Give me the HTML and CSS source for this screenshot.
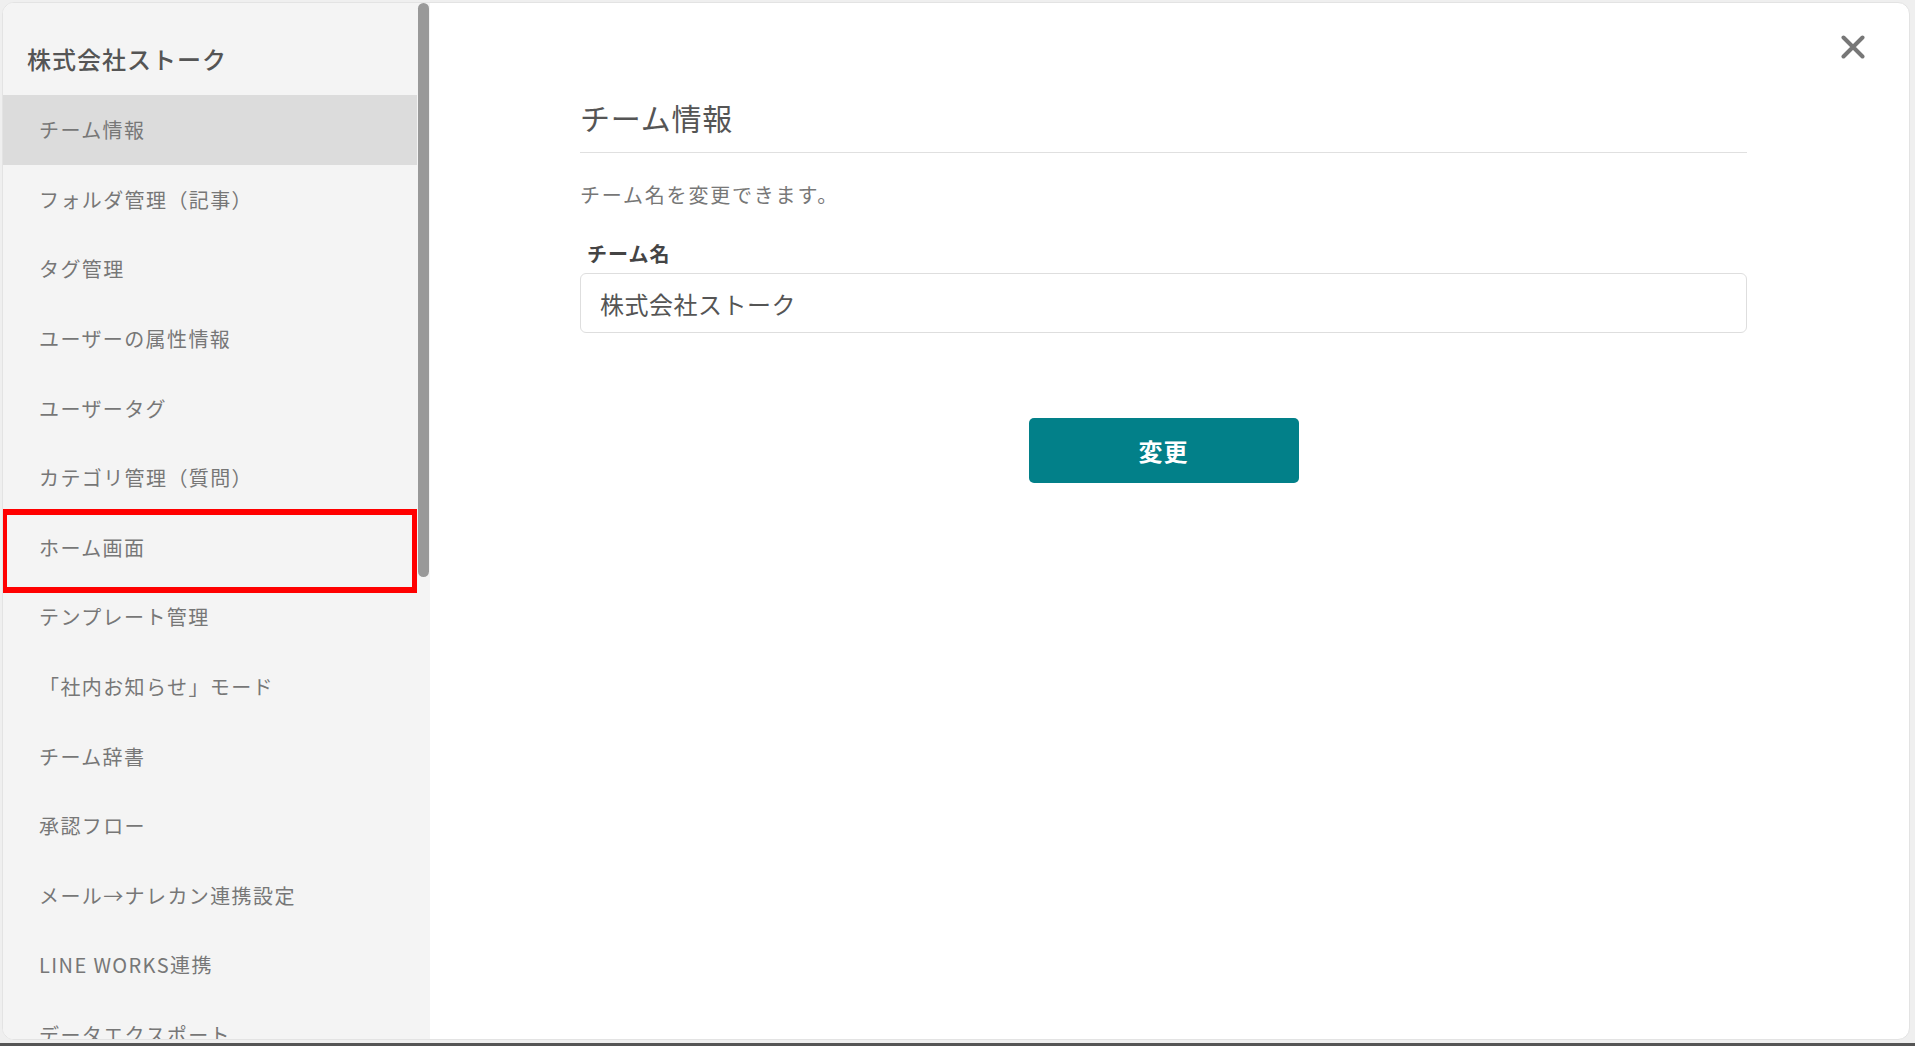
FILE: index.html
```html
<!DOCTYPE html>
<html lang="ja">
	<head>
		<meta charset="UTF-8" />
		<meta name="viewport" content="width=device-width, initial-scale=1.0" />
		<title>チーム設定</title>
		<link rel="stylesheet" href="styles.css">
	</head>
	<body>
		<div class="modal">
			<div class="sidebar">
				<div class="side-menu">
					<div class="team-title">株式会社ストーク</div>
					<div class="menu-item active">チーム情報</div>
					<div class="menu-item">フォルダ管理（記事）</div>
					<div class="menu-item">タグ管理</div>
					<div class="menu-item">ユーザーの属性情報</div>
					<div class="menu-item">ユーザータグ</div>
					<div class="menu-item">カテゴリ管理（質問）</div>
					<div class="menu-item highlight">ホーム画面</div>
					<div class="menu-item">テンプレート管理</div>
					<div class="menu-item">「社内お知らせ」モード</div>
					<div class="menu-item">チーム辞書</div>
					<div class="menu-item">承認フロー</div>
					<div class="menu-item">メール→ナレカン連携設定</div>
					<div class="menu-item">LINE WORKS連携</div>
					<div class="menu-item">データエクスポート</div>
				</div>
				<div class="scroll-track">
					<div class="scroll-thumb"></div>
				</div>
			</div>

			<div class="main">
				<span class="close">
					<svg width="24" height="24" viewBox="0 0 24 24">
						<path d="M2.5 2.5 L21.5 21.5 M21.5 2.5 L2.5 21.5" stroke="#777" stroke-width="4" stroke-linecap="round" fill="none" />
					</svg>
				</span>
				<h2 class="page-title">チーム情報</h2>
				<p class="description">チーム名を変更できます。</p>
				<label class="field-label" for="teamName">チーム名</label>
				<input type="text" id="teamName" class="text-input" value="株式会社ストーク" />
				<div class="actions">
					<button class="primary-button">変更</button>
				</div>
			</div>
		</div>
		<div class="bottom-bar"></div>
	</body>
</html>
```

FILE: styles.css
```css
body {
	margin: 0;
	height: 1046px;
	overflow: hidden;
	display: flex;
	flex-direction: column;
	background-color: #efefef;
	font-family: "Noto Sans CJK JP", "Noto Sans", sans-serif;
}
.modal {
	flex: 1;
	display: flex;
	margin: 2px 5px 3px 2px;
	background-color: #fff;
	border: 1px solid #e3e3e3;
	border-radius: 12px;
	overflow: hidden;
	min-height: 0;
}
.bottom-bar {
	height: 3px;
	background-color: #555;
}
.sidebar {
	width: 427px;
	display: flex;
	background-color: #f4f4f4;
	flex-shrink: 0;
}
.side-menu {
	width: 414px;
	overflow: hidden;
}
.team-title {
	height: 92px;
	box-sizing: border-box;
	padding: 18px 0 0 24px;
	display: flex;
	align-items: center;
	font-size: 24px;
	font-weight: 500;
	letter-spacing: 1px;
	color: #555;
}
.menu-item {
	position: relative;
	height: 69.6px;
	box-sizing: border-box;
	padding-left: 36px;
	display: flex;
	align-items: center;
	font-size: 20px;
	letter-spacing: 1.4px;
	color: #777;
}
.menu-item.active {
	background-color: #dcdcdc;
}
.menu-item.highlight::after {
	content: "";
	position: absolute;
	top: -4px;
	bottom: -11px;
	left: -1px;
	right: 0;
	border: solid #ff0000;
	border-width: 6px 5px;
}
.scroll-track {
	width: 13px;
	box-sizing: border-box;
	padding: 0 1px;
}
.scroll-thumb {
	height: 574px;
	background-color: #999;
	border-radius: 6px;
}
.main {
	position: relative;
	flex: 1;
	padding: 94px 162px 0 150px;
}
.close {
	position: absolute;
	top: 32px;
	right: 44px;
	cursor: pointer;
}
.page-title {
	margin: 0;
	padding-bottom: 15px;
	border-bottom: 1px solid #e0e0e0;
	font-size: 30px;
	font-weight: normal;
	line-height: 40px;
	letter-spacing: 0.8px;
	color: #555;
}
.description {
	margin: 28px 0 0;
	font-size: 20px;
	line-height: 28px;
	letter-spacing: 1.8px;
	color: #777;
}
.field-label {
	display: block;
	margin-top: 31px;
	padding-left: 7px;
	font-size: 20px;
	font-weight: bold;
	line-height: 28px;
	letter-spacing: 1px;
	color: #444;
}
.text-input {
	display: block;
	width: 100%;
	height: 60px;
	box-sizing: border-box;
	margin-top: 5px;
	padding: 0 19px;
	border: 1px solid #dedede;
	border-radius: 6px;
	font-family: inherit;
	font-size: 24px;
	letter-spacing: 0.5px;
	color: #555;
	outline: none;
}
.actions {
	display: flex;
	justify-content: center;
	margin-top: 85px;
}
.primary-button {
	width: 270px;
	height: 65px;
	background-color: #028089;
	color: #fff;
	border: none;
	border-radius: 5px;
	font-family: inherit;
	font-size: 24px;
	font-weight: bold;
	letter-spacing: 1px;
	cursor: pointer;
}
```
